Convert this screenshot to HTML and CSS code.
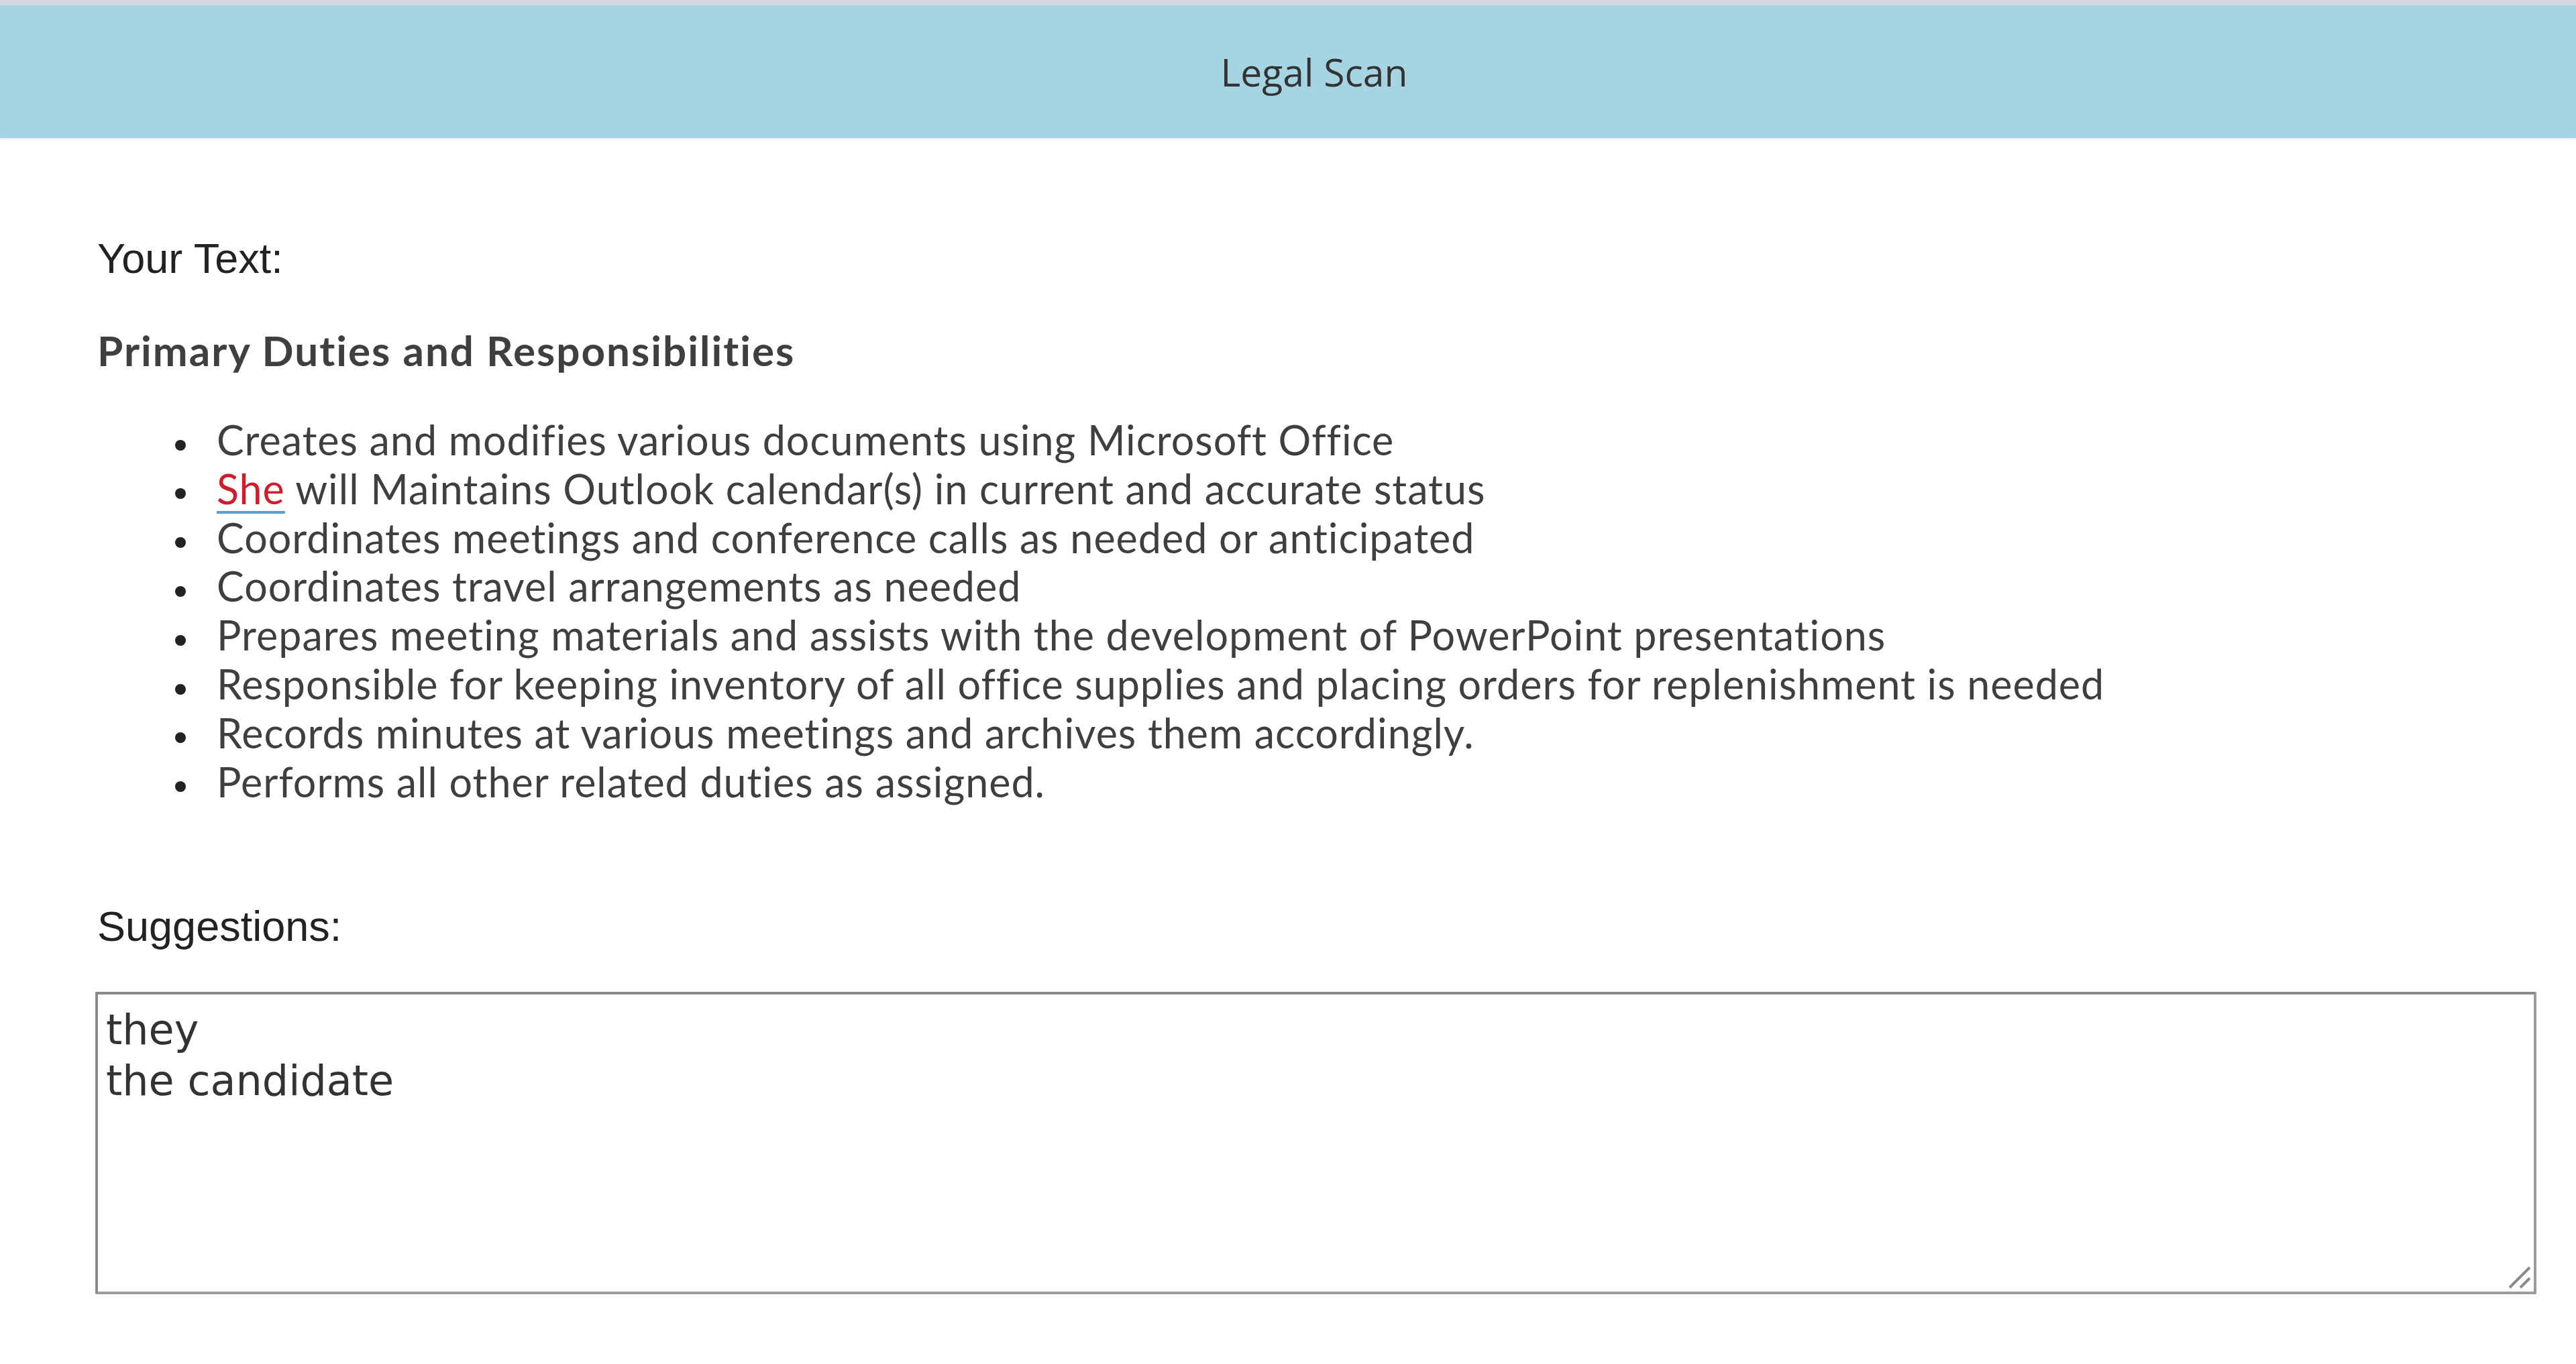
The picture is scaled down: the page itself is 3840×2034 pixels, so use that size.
FILE: index.html
```html
<!DOCTYPE html>
<html lang="en">
<head>
    <meta charset="UTF-8">
    <meta name="viewport" content="width=device-width, initial-scale=1.0">
    <title>Legal Scan</title>
    <link rel="stylesheet" href="styles.css">
</head>
<body>
    <div class="topbar"></div>
    <div class="header">Legal Scan</div>

    <div class="content">
        <p class="label">Your Text:</p>

        <div class="scanned">
            <p class="section-title">Primary Duties and Responsibilities</p>
            <ul class="duties">
                <li>Creates and modifies various documents using Microsoft Office</li>
                <li><span class="flagged">She</span> will Maintains Outlook calendar(s) in current and accurate status</li>
                <li>Coordinates meetings and conference calls as needed or anticipated</li>
                <li>Coordinates travel arrangements as needed</li>
                <li>Prepares meeting materials and assists with the development of PowerPoint presentations</li>
                <li>Responsible for keeping inventory of all office supplies and placing orders for replenishment is needed</li>
                <li>Records minutes at various meetings and archives them accordingly.</li>
                <li>Performs all other related duties as assigned.</li>
            </ul>
        </div>

        <p class="label suggestions-label">Suggestions:</p>

        <div class="suggestions-box">
            <textarea id="suggestions" readonly>they
the candidate</textarea>
            <!-- resize grip -->
            <svg class="grip" width="40" height="40" viewBox="0 0 40 40">
                <line x1="6" y1="36" x2="36" y2="6" stroke="#8a8a8a" stroke-width="4"/>
                <line x1="22" y1="36" x2="36" y2="22" stroke="#8a8a8a" stroke-width="4"/>
            </svg>
        </div>
    </div>
</body>
</html>
```

FILE: styles.css
```css
body { margin: 0; background: #fff; font-family: 'Liberation Sans', Arial, sans-serif; }
.topbar {
    height: 8px;
    background-color: #d4d7dd;
}
.header {
    background-color: #a6d4e2;
    color: #333;
    text-align: center;
    font-family: 'Open Sans', 'Segoe UI', sans-serif;
    font-size: 57px;
    height: 198px;
    line-height: 198px;
    padding-left: 78px;
    box-shadow: 0 2px 3px rgba(0,0,0,0.08);
}
.content {
    padding: 146px 59px 0 142px;
}
.label {
    margin: 0;
    font-size: 63px;
    line-height: 66px;
    color: #222;
    padding-left: 3px;
}
.scanned {
    font-family: Lato, 'Open Sans', sans-serif;
    color: #3f3f3f;
}
.section-title {
    margin: 71px 0 0 3px;
    font-weight: bold;
    font-size: 62px;
    line-height: 66px;
    letter-spacing: 2px;
}
.duties {
    margin: 65px 0 0 0;
    padding-left: 181px;
    list-style: none;
    font-size: 61px;
    line-height: 72.8px;
    letter-spacing: 1px;
}
.duties li:before {
    content: '';
    display: inline-block;
    width: 16px;
    height: 16px;
    border-radius: 50%;
    background: #222;
    margin-left: -62px;
    margin-right: 46px;
    vertical-align: middle;
}
.flagged {
    color: #c8202e;
    text-decoration: underline solid #5a9fc9;
    text-decoration-thickness: 4px;
    text-underline-offset: 10px;
}
.suggestions-label {
    margin-top: 146px;
}
.suggestions-box {
    position: relative;
    margin-top: 65px;
}
textarea {
    display: block;
    box-sizing: border-box;
    width: 100%;
    height: 451px;
    padding: 15px 12px;
    border: 4px solid #9c9c9c;
    border-top-color: #8a8a8a;
    border-left-color: #8a8a8a;
    border-radius: 2px;
    resize: none;
    font-family: 'DejaVu Sans', Verdana, sans-serif;
    font-size: 62px;
    line-height: 76px;
    color: #333;
    background: #fff;
    outline: none;
}
.grip {
    position: absolute;
    right: 6px;
    bottom: 6px;
}
```
